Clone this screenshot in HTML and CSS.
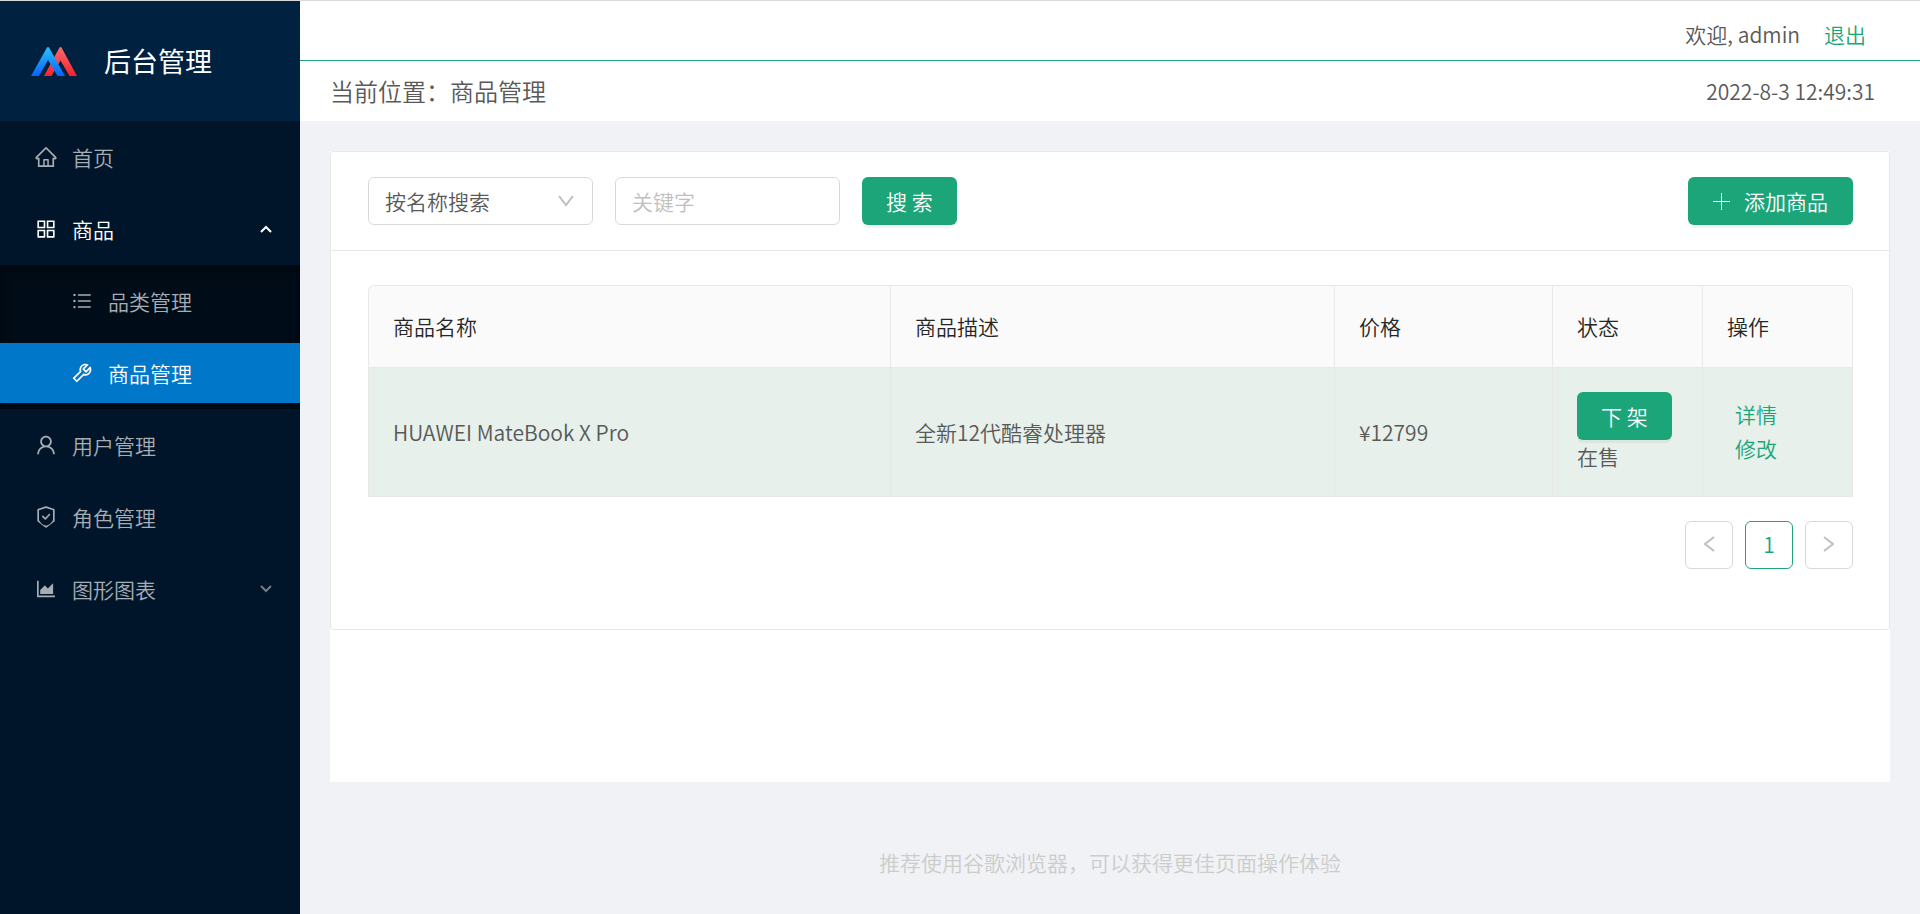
FILE: index.html
```html
<!DOCTYPE html>
<html lang="zh-CN">
<head>
<meta charset="utf-8">
<title>后台管理</title>
<meta name="viewport" content="width=device-width, initial-scale=1">
<link rel="stylesheet" href="styles.css">
</head>
<body>
<div class="layout">
  <aside class="sider">
    <a class="brand" href="#">
      <svg class="brand-logo" viewBox="0 0 46 29" aria-hidden="true">
        <defs>
          <linearGradient id="red" x1="0" y1="0" x2="0" y2="1"><stop offset="0" stop-color="#fa6a6c"/><stop offset="1" stop-color="#f5222d"/></linearGradient>
          <linearGradient id="blue" x1="0" y1="0" x2="0" y2="1"><stop offset="0" stop-color="#29c0fb"/><stop offset="1" stop-color="#0b63fa"/></linearGradient>
        </defs>
        <path fill="url(#red)" d="M28.500 .6Q29.500-.4 30.500 .6L46 29H38.500L29.500 13.500L20.500 29H13Z"/>
        <path fill="url(#blue)" d="M16 .6Q17-.4 18 .6L34 29H26.500L17 13L8 29H0Z"/>
      </svg>
      <span class="brand-name">后台管理</span>
    </a>
    <nav class="menu">
      <a class="menu-item" href="#">
        <svg class="icon" viewBox="0 0 1024 1024" aria-hidden="true"><path d="M946.500 505L560.100 118.800l-25.900-25.900a31.500 31.500 0 0 0-44.400 0L77.500 505a63.900 63.900 0 0 0-18.800 46c.4 35.200 29.700 63.300 64.900 63.300h42.500V940h691.800V614.300h43.400c17.100 0 33.200-6.700 45.300-18.800a63.600 63.600 0 0 0 18.700-45.300c0-17-6.700-33.100-18.800-45.200zM568 868H456V664h112v204zm217.900-325.700V868H632V640c0-22.100-17.900-40-40-40H432c-22.100 0-40 17.900-40 40v228H238.100V542.300h-96l370-369.700 23.100 23.100L882 542.300h-96.100z"/></svg>
        <span>首页</span>
      </a>
      <button class="menu-item open" type="button" aria-expanded="true">
        <svg class="icon" viewBox="0 0 1024 1024" aria-hidden="true"><path d="M464 144H160c-8.800 0-16 7.200-16 16v304c0 8.800 7.200 16 16 16h304c8.800 0 16-7.200 16-16V160c0-8.800-7.200-16-16-16zm-52 268H212V212h200v200zm452-268H560c-8.800 0-16 7.200-16 16v304c0 8.800 7.200 16 16 16h304c8.800 0 16-7.200 16-16V160c0-8.800-7.200-16-16-16zm-52 268H612V212h200v200zM464 544H160c-8.800 0-16 7.200-16 16v304c0 8.800 7.200 16 16 16h304c8.800 0 16-7.200 16-16V560c0-8.800-7.200-16-16-16zm-52 268H212V612h200v200zm452-268H560c-8.800 0-16 7.200-16 16v304c0 8.800 7.200 16 16 16h304c8.800 0 16-7.200 16-16V560c0-8.800-7.200-16-16-16zm-52 268H612V612h200v200z"/></svg>
        <span>商品</span>
        <svg class="arrow" viewBox="0 0 12 8" aria-hidden="true"><path d="M1 7L6 2L11 7"/></svg>
      </button>
      <div class="submenu">
        <a class="menu-item" href="#">
          <svg class="icon" viewBox="-48 -48 1120 1120" aria-hidden="true"><path d="M912 192H328c-4.400 0-8 3.600-8 8v56c0 4.400 3.600 8 8 8h584c4.400 0 8-3.600 8-8v-56c0-4.400-3.600-8-8-8zm0 284H328c-4.400 0-8 3.600-8 8v56c0 4.400 3.600 8 8 8h584c4.400 0 8-3.600 8-8v-56c0-4.400-3.600-8-8-8zm0 284H328c-4.400 0-8 3.600-8 8v56c0 4.400 3.600 8 8 8h584c4.400 0 8-3.600 8-8v-56c0-4.400-3.600-8-8-8zM104 228a56 56 0 1 0 112 0 56 56 0 1 0-112 0zm0 284a56 56 0 1 0 112 0 56 56 0 1 0-112 0zm0 284a56 56 0 1 0 112 0 56 56 0 1 0-112 0z"/></svg>
          <span>品类管理</span>
        </a>
        <a class="menu-item selected" href="#" aria-current="page">
          <svg class="icon" viewBox="0 0 1024 1024" aria-hidden="true"><path d="M876.600 239.500c-.5-.9-1.200-1.800-2-2.500-5-5-13.100-5-18.100 0L684.200 409.300l-67.900-67.900L788.700 169c.8-.8 1.400-1.600 2-2.500 3.600-6.100 1.600-13.900-4.500-17.500-98.200-58-226.800-44.700-311.300 39.700-67 67-89.200 162-66.500 247.400l-293 293c-3 3-2.800 7.900.3 11l169.700 169.700c3.100 3.100 8.100 3.300 11 .3l292.900-292.900c85.500 22.800 180.500.7 247.600-66.400 84.400-84.500 97.700-213.100 39.700-311.300zM786 499.800c-58.100 58.100-145.300 69.300-214.600 33.600l-8.800 8.800-.1-.1-274 274.100-79.200-79.200 230.100-230.100s0 .1.1.1l52.800-52.800c-35.700-69.300-24.500-156.500 33.600-214.600a184.200 184.200 0 0 1 144-53.500L537 318.900a32.050 32.050 0 0 0 0 45.300l124.500 124.500a32.050 32.050 0 0 0 45.300 0l132.800-132.800c3.700 51.800-14.400 104.800-53.600 143.900z"/></svg>
          <span>商品管理</span>
        </a>
      </div>
      <a class="menu-item" href="#">
        <svg class="icon" viewBox="0 0 1024 1024" aria-hidden="true"><path d="M858.500 763.600a374 374 0 0 0-80.600-119.500 375.630 375.630 0 0 0-119.500-80.600c-.4-.2-.8-.3-1.200-.5C719.500 518 760 444.700 760 362c0-137-111-248-248-248S264 225 264 362c0 82.700 40.500 156 102.800 201.100-.4.2-.8.3-1.200.5-44.800 18.900-85 46-119.500 80.600a375.630 375.630 0 0 0-80.600 119.500A371.700 371.700 0 0 0 136 901.800a8 8 0 0 0 8 8.200h60c4.400 0 7.900-3.500 8-7.800 2-77.200 33-149.500 87.800-204.300 56.700-56.700 132-87.900 212.200-87.900s155.500 31.200 212.200 87.900C779 752.700 810 825 812 902.200c.1 4.400 3.600 7.800 8 7.800h60a8 8 0 0 0 8-8.200c-1-47.800-10.900-94.300-29.500-138.200zM512 534c-45.900 0-89.100-17.900-121.600-50.400S340 407.900 340 362c0-45.900 17.900-89.100 50.400-121.600S466.100 190 512 190s89.100 17.900 121.600 50.400S684 316.100 684 362c0 45.900-17.900 89.100-50.400 121.600S557.900 534 512 534z"/></svg>
        <span>用户管理</span>
      </a>
      <a class="menu-item" href="#">
        <svg class="icon" viewBox="0 0 1024 1024" aria-hidden="true"><path d="M866.900 169.900L527.100 54.100C523 52.700 517.500 52 512 52s-11 .7-15.100 2.100L157.100 169.900c-8.300 2.800-15.100 12.400-15.100 21.200v482.400c0 8.800 5.700 20.400 12.600 25.900L499.300 968c3.500 2.700 8 4.100 12.600 4.100s9.200-1.400 12.600-4.100l344.700-268.600c6.900-5.400 12.600-17 12.600-25.900V191.100c.2-8.800-6.600-18.300-14.900-21.200zM810 654.300Q700 850 512 888.600Q324 850 214 654.300V226.700l298-101.600 298 101.600v427.600z"/><path d="M402.900 461a36 36 0 0 0-51 51l107 107a36 36 0 0 0 51 0l173-190a34 34 0 0 0-50-46L484 543z"/></svg>
        <span>角色管理</span>
      </a>
      <button class="menu-item" type="button" aria-expanded="false">
        <svg class="icon" viewBox="0 0 1024 1024" aria-hidden="true"><path d="M888 792H200V168c0-4.400-3.600-8-8-8h-56c-4.400 0-8 3.600-8 8v688c0 4.400 3.600 8 8 8h752c4.400 0 8-3.600 8-8v-56c0-4.400-3.600-8-8-8zm-616-64h536c4.400 0 8-3.600 8-8V284c0-7.200-8.700-10.700-13.700-5.700L592 488.600l-125.400-124a8.030 8.030 0 0 0-11.300 0l-189 189.600a7.870 7.870 0 0 0-2.300 5.600V720c0 4.400 3.600 8 8 8z"/></svg>
        <span>图形图表</span>
        <svg class="arrow dim" viewBox="0 0 12 8" aria-hidden="true"><path d="M1 1L6 6L11 1"/></svg>
      </button>
    </nav>
  </aside>

  <div class="page">
    <header class="header">
      <div class="header-top">
        <span>欢迎, admin</span>
        <a class="link" href="#">退出</a>
      </div>
      <div class="header-bottom">
        <h1 class="location">当前位置：商品管理</h1>
        <time datetime="2022-08-03T12:49:31">2022-8-3 12:49:31</time>
      </div>
    </header>

    <main class="content">
      <section class="card">
        <form class="card-head">
          <div class="select-wrap">
            <select class="field select" aria-label="搜索方式">
              <option>按名称搜索</option>
              <option>按描述搜索</option>
            </select>
            <svg class="select-arrow" viewBox="0 0 16 12" aria-hidden="true"><path d="M1 1L8 10L15 1"/></svg>
          </div>
          <input class="field keyword" type="text" placeholder="关键字" aria-label="关键字">
          <button class="btn" type="button">搜 索</button>
          <button class="btn add" type="button">
            <svg class="plus" viewBox="0 0 17 17" aria-hidden="true"><path d="M8.500 0V17M0 8.500H17"/></svg>
            <span>添加商品</span>
          </button>
        </form>
        <div class="card-body">
          <table class="table">
            <colgroup><col><col class="col-desc"><col class="col-price"><col class="col-state"><col class="col-action"></colgroup>
            <thead>
              <tr><th>商品名称</th><th>商品描述</th><th>价格</th><th>状态</th><th>操作</th></tr>
            </thead>
            <tbody>
              <tr>
                <td>HUAWEI MateBook X Pro</td>
                <td>全新12代酷睿处理器</td>
                <td>¥12799</td>
                <td><div class="state"><button class="btn" type="button">下 架</button><span>在售</span></div></td>
                <td><div class="actions"><a class="link" href="#">详情</a><a class="link" href="#">修改</a></div></td>
              </tr>
            </tbody>
          </table>
          <nav class="pagination" aria-label="分页">
            <button class="page-btn" type="button" disabled aria-label="上一页"><svg class="page-arrow" viewBox="0 0 12 16" aria-hidden="true"><path d="M11 1L2 8L11 15"/></svg></button>
            <button class="page-btn current" type="button" aria-current="page">1</button>
            <button class="page-btn" type="button" disabled aria-label="下一页"><svg class="page-arrow" viewBox="0 0 12 16" aria-hidden="true"><path d="M1 1L10 8L1 15"/></svg></button>
          </nav>
        </div>
      </section>
    </main>

    <footer class="footer">推荐使用谷歌浏览器，可以获得更佳页面操作体验</footer>
  </div>
</div>
</body>
</html>
```
FILE: styles.css
```css
* { box-sizing: border-box; }

body {
  display: flex;
  min-height: 100vh;
  margin: 0;
  border-top: 1px solid #d9d9d9;
  background: #f0f2f5;
  color: #595959;
  font: 350 21px/32px "Noto Sans CJK SC", "Noto Sans", sans-serif;
}

button, input, select { font: inherit; color: inherit; }
button { cursor: pointer; }
a { text-decoration: none; }

.layout {
  display: flex;
  flex: 1;
  min-width: 0;
}

/* Sidebar */
.sider {
  flex: 0 0 300px;
  background: #001529;
}

.brand {
  display: flex;
  align-items: center;
  gap: 27px;
  height: 120px;
  padding: 0 31px;
  background: #002140;
  color: #fff;
}

.brand-logo { width: 46px; height: 29px; }
.brand-name { font-size: 27px; font-weight: 400; }

.menu {
  display: flex;
  flex-direction: column;
  gap: 12px;
  padding: 6px 0;
}

.menu-item {
  display: flex;
  align-items: center;
  gap: 14px;
  width: 100%;
  height: 60px;
  padding: 0 28px 0 34px;
  border: 0;
  background: none;
  color: #a6adb4;
}

.menu-item.open { color: #fff; }
.menu-item.selected { background: #0077c8; color: #fff; }

.icon { width: 24px; height: 24px; fill: currentColor; }

.arrow {
  width: 12px;
  height: 8px;
  margin-left: auto;
  fill: none;
  stroke: currentColor;
  stroke-width: 2;
}

.arrow.dim { stroke: #737d87; }

.submenu {
  display: flex;
  flex-direction: column;
  gap: 12px;
  margin: -6px 0;
  padding: 6px 0;
  background: #000c17;
  box-shadow: inset 0 3px 12px rgba(0, 0, 0, .45);
}

.submenu .menu-item { padding-left: 70px; }

/* Header */
.page {
  display: flex;
  flex: 1;
  flex-direction: column;
  min-width: 0;
}

.header { background: #fff; }

.header-top {
  display: flex;
  align-items: center;
  justify-content: flex-end;
  gap: 24px;
  height: 60px;
  padding: 6px 54px 0 30px;
  border-bottom: 1px solid #1da57a;
}

.header-bottom {
  display: flex;
  align-items: center;
  justify-content: space-between;
  height: 60px;
  padding: 0 45px 0 30px;
}

.location { margin: 0; font-size: 24px; font-weight: 350; }
.link { color: #1da57a; }

/* Content */
.content {
  flex: 1;
  margin: 30px 30px 0;
  background: #fff;
}

.card {
  border: 1px solid #e8e8e8;
  border-radius: 3px;
}

.card-head {
  display: flex;
  align-items: center;
  gap: 22px;
  height: 99px;
  padding: 0 36px 0 37px;
  border-bottom: 1px solid #e8e8e8;
}

.select-wrap { position: relative; }

.field {
  width: 225px;
  height: 48px;
  padding: 0 16px;
  border: 1px solid #d9d9d9;
  border-radius: 6px;
  background: #fff;
}

.select { display: block; appearance: none; }
.keyword::placeholder { color: #bfbfbf; }

.select-arrow {
  position: absolute;
  top: 18px;
  right: 19px;
  width: 16px;
  height: 12px;
  fill: none;
  stroke: #bfbfbf;
  stroke-width: 2;
  pointer-events: none;
}

.btn {
  display: flex;
  align-items: center;
  justify-content: center;
  gap: 14px;
  height: 48px;
  padding: 0 24px;
  border: 0;
  border-radius: 6px;
  background: #1da57a;
  box-shadow: 0 3px 0 rgba(0, 0, 0, .045);
  color: #fff;
}

.add { margin-left: auto; padding: 0 25px; }

.plus {
  width: 17px;
  height: 17px;
  fill: none;
  stroke: currentColor;
  stroke-width: 1;
}

.card-body { padding: 34px 36px 60px 37px; }

/* Table */
.table {
  width: 100%;
  table-layout: fixed;
  border-collapse: separate;
  border-spacing: 0;
  border: 1px solid #e8e8e8;
  border-width: 1px 0 0 1px;
  border-radius: 6px 6px 0 0;
}

.col-desc { width: 444px; }
.col-price { width: 218px; }
.col-state, .col-action { width: 150px; }

.table th,
.table td {
  padding: 24px;
  border: 1px solid #e8e8e8;
  border-width: 0 1px 1px 0;
  text-align: left;
}

.table th {
  padding-bottom: 25px;
  background: #fafafa;
  color: #262626;
  font-weight: 350;
}

.table th:first-child { border-top-left-radius: 6px; }
.table th:last-child { border-top-right-radius: 6px; }
.table td { background: #e7f0ea; }

.state { display: flex; flex-direction: column; align-items: flex-start; }

.actions {
  display: flex;
  flex-direction: column;
  padding: 0 8px 3px;
  line-height: 34px;
}

.pagination {
  display: flex;
  justify-content: flex-end;
  gap: 12px;
  padding-top: 24px;
}

.page-btn {
  display: flex;
  align-items: center;
  justify-content: center;
  width: 48px;
  height: 48px;
  padding: 0 0 3px;
  border: 1px solid #d9d9d9;
  border-radius: 6px;
  background: #fff;
  color: #bfbfbf;
}

.page-btn.current { border-color: #1da57a; color: #1da57a; }

.page-arrow {
  width: 12px;
  height: 16px;
  fill: none;
  stroke: currentColor;
  stroke-width: 2;
}

.footer {
  padding: 64px 30px 36px;
  color: #ccc;
  text-align: center;
}
```
